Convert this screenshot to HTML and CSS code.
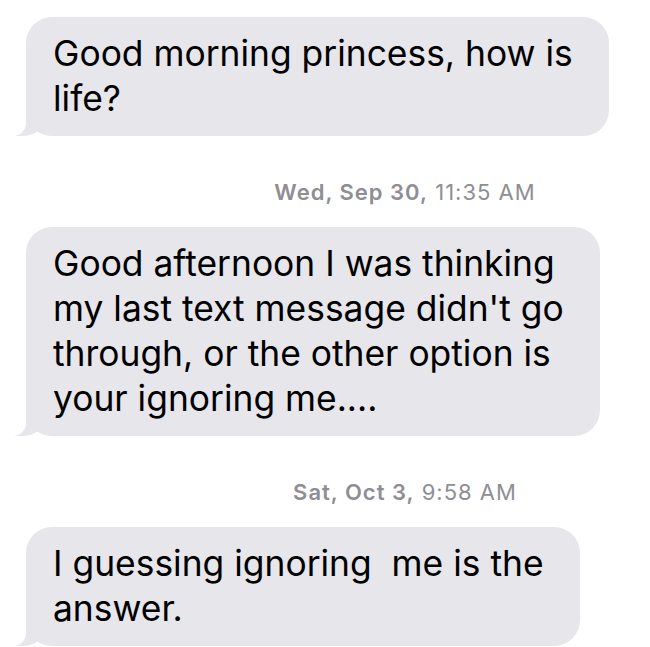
FILE: index.html
```html
<!DOCTYPE html>
<html lang="en">
  <head>
    <meta charset="UTF-8" />
    <meta name="viewport" content="width=device-width, initial-scale=1.0" />
    <title>Messages</title>

    <link rel="stylesheet" href="styles.css">
  </head>
  <body>
    <main class="thread">
      <div class="bubble">
        Good morning princess, how is<br />life?
      </div>

      <p class="stamp"><b>Wed, Sep 30,</b> 11:35 AM</p>

      <div class="bubble">
        Good afternoon I was thinking<br />
        my last text message didn't go<br />
        through, or the other option is<br />
        your ignoring me....
      </div>

      <p class="stamp"><b>Sat, Oct 3,</b> 9:58 AM</p>

      <div class="bubble">
        I guessing ignoring&nbsp; me is the<br />answer.
      </div>
    </main>
  </body>
</html>
```

FILE: styles.css
```css
html {
  box-sizing: border-box;
  font-family: "Inter", "Liberation Sans", sans-serif;
  font-size: 16px;
}

*,
*:before,
*:after {
  box-sizing: inherit;
}

body {
  margin: 0;
  padding: 0;
  background: #fff;
  color: #000;
  overflow: hidden;
}

/* **********Hilo de mensajes********** */
.thread {
  --bubble-color: #e6e6eb;
  display: flex;
  flex-direction: column;
  align-items: flex-start;
  padding: 17px 0 0 26px;
}

.bubble {
  position: relative;
  padding: 14px 36px 15px 27px;
  border-radius: 26px;
  background-color: var(--bubble-color);
  font-size: 35.4px;
  line-height: 45px;
}

/* la colita del globo */
.bubble:before {
  content: "";
  position: absolute;
  bottom: 0;
  left: -13px;
  width: 34px;
  height: 30px;
  background-color: var(--bubble-color);
  border-bottom-right-radius: 24px;
  z-index: -1;
}

.bubble:after {
  content: "";
  position: absolute;
  bottom: 0;
  left: -26px;
  width: 26px;
  height: 30px;
  background-color: #fff;
  border-bottom-right-radius: 13px;
}

.stamp {
  align-self: stretch;
  margin: 44px 0 23px;
  padding-left: 134px;
  text-align: center;
  color: #8e8e93;
  font-size: 22px;
  line-height: 24px;
  letter-spacing: 1px;
}

.stamp b {
  font-weight: 600;
}
```
